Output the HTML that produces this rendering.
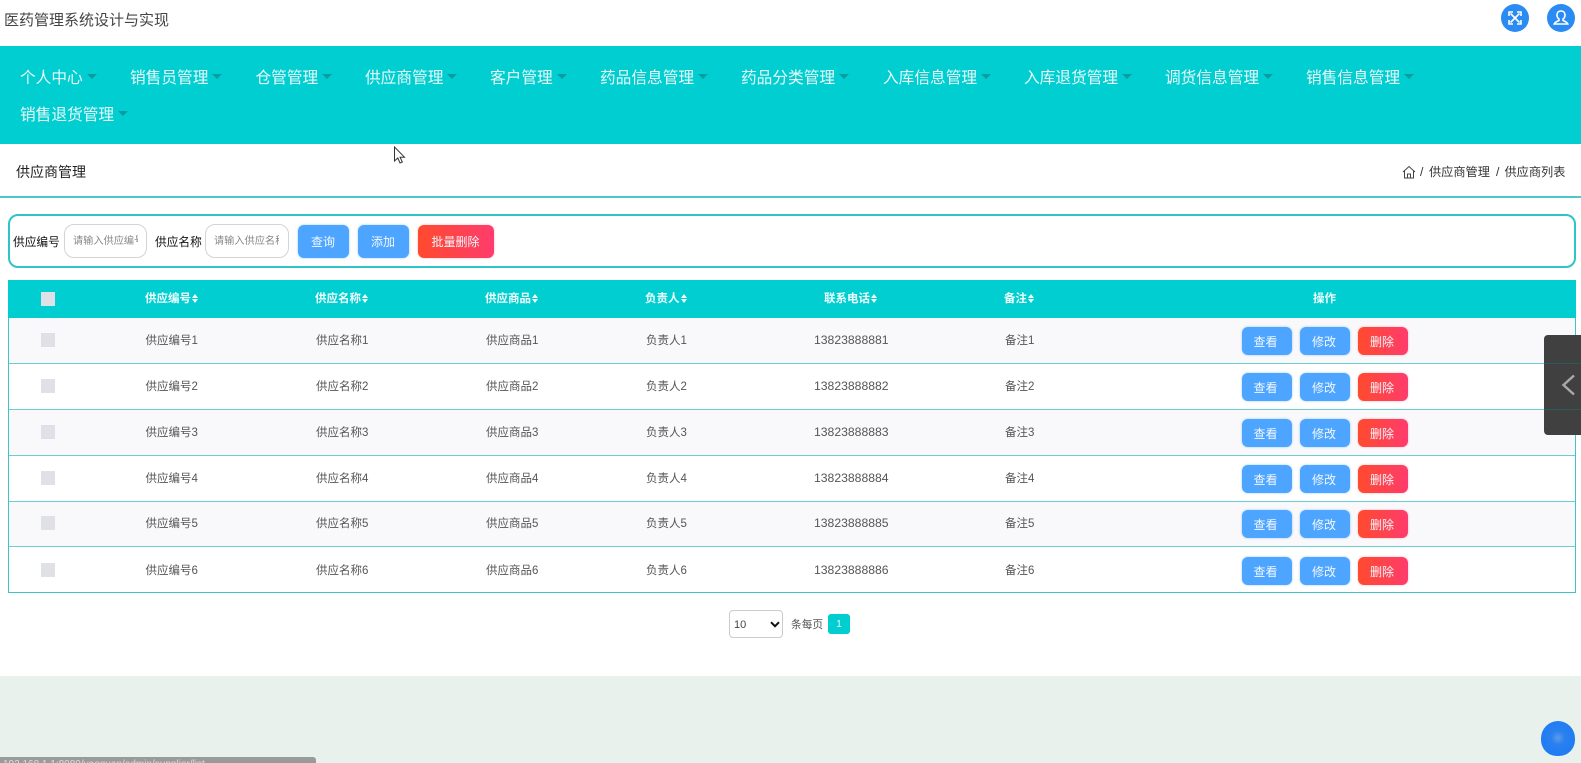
<!DOCTYPE html>
<html lang="zh">
<head>
<meta charset="utf-8">
<title>医药管理系统设计与实现</title>
<style>
*{box-sizing:border-box}
html,body{margin:0;padding:0;width:1581px;height:763px;overflow:hidden;background:#fff}
body{font-family:"Liberation Sans","Noto Sans CJK SC",sans-serif;color:#333}
#w{position:absolute;left:0;top:0;width:1581px;height:763px;overflow:hidden;filter:blur(.35px)}
.a{position:absolute;white-space:nowrap}
.title{left:4px;top:10px;font-size:15px;line-height:22px;color:#444}
.ic{position:absolute;top:4px;width:28px;height:28px;border-radius:50%;background:#2a8bf2}
.nav{position:absolute;left:0;top:46px;width:1581px;height:98px;background:#00ced1}
.n{position:absolute;font-size:15.7px;line-height:22px;color:#eafafa;white-space:nowrap}
.n i{display:inline-block;width:0;height:0;border-left:5px solid transparent;border-right:5px solid transparent;border-top:5px solid #0a9ca0;margin-left:4px;vertical-align:4px}
.crumbline{position:absolute;left:0;top:196px;width:1581px;height:2px;background:#4cc6c9}
.search{position:absolute;left:8px;top:214px;width:1568px;height:54px;border:2px solid #2fc4c7;border-radius:10px;background:#fff}
.lb{font-size:11.7px;line-height:16px;color:#111;top:235px}
.inp{position:absolute;top:224px;height:34px;border:1px solid #d4d4d4;border-radius:10px;background:#fff;font-size:10.2px;color:#888}
.inp span{position:absolute;left:8px;top:9px;height:16px;line-height:16px;overflow:hidden;white-space:nowrap}
.btn{position:absolute;border-radius:6px;color:#f2f8ff;text-align:center;background:#4ea5ff;box-shadow:0 0 2px rgba(64,158,255,.55)}
.top{top:225px;height:33px;line-height:35px;font-size:12px;padding-right:1px}
.red{background:linear-gradient(90deg,#ff4a2e,#ff3c6c);box-shadow:0 0 2px rgba(255,70,90,.4)}
.thead{position:absolute;left:8px;top:280px;width:1568px;height:38px;background:#00ced1}
.th{position:absolute;top:291px;font-size:11.5px;line-height:16px;font-weight:700;color:#f2ffff;white-space:nowrap}
.th b{display:inline-block;width:7px;height:9px;margin-left:1px;vertical-align:-1px;position:relative}
.th b:before{content:"";position:absolute;left:0;top:0;border-left:3.5px solid transparent;border-right:3.5px solid transparent;border-bottom:4px solid #f2ffff}
.th b:after{content:"";position:absolute;left:0;top:5px;border-left:3.5px solid transparent;border-right:3.5px solid transparent;border-top:4px solid #f2ffff}
.cb{position:absolute;left:41px;width:14px;height:14px;background:#dfe1e6}
.tbody{position:absolute;left:8px;top:318px;width:1568px;height:275px;border:1px solid #3fc3c6;border-top:0}
.r{position:absolute;left:8px;width:1568px;height:46px;border-bottom:1px solid #6bcfd1}
.r.odd{background:#f9f9fb}
.r.last{border-bottom:0;height:45px}
.rl{position:absolute;left:8px;top:501px;width:1568px;height:1px;background:#6bcfd1}
.td{position:absolute;font-size:11.5px;line-height:16px;color:#555;white-space:nowrap;top:15px}
.td.p{font-size:12.2px;top:14px}
.r .cb{left:33px;top:15px}
.b{top:9px;height:28px;line-height:30px;width:50px;font-size:12px;padding-right:2px}
.foot{position:absolute;left:0;top:676px;width:1581px;height:87px;background:#e8f1ec}
.sel{position:absolute;left:729px;top:610px;width:54px;height:28px;border:1px solid #ccc;border-radius:4px;background:#fff;font-size:11px;line-height:28px;padding-left:4px;color:#444}
.pg{position:absolute;left:828px;top:614px;width:22px;height:20px;border-radius:3px;background:#00ced1;color:#e9fbfb;font-size:10px;line-height:22px;text-align:center}
.side{position:absolute;left:1544px;top:335px;width:37px;height:100px;background:#404040;border-radius:4px 0 0 4px}
.side div{position:absolute;left:0;width:37px;height:1px;background:#2f5a5b}
.status{position:absolute;left:0;top:757px;width:316px;height:6px;background:#999b9a;border-radius:0 3px 0 0;overflow:hidden;color:#ddd;font-size:10px;line-height:16px;padding-left:3px;white-space:nowrap}
.blob{position:absolute;left:1541px;top:721px;width:34px;height:35px;border-radius:50% 50% 46% 46%;background:radial-gradient(circle at 50% 48%,#5d9be8 0,#2a80ee 28%,#1f7cf4 70%,#5aa6f6 100%)}
</style>
</head>
<body>
<div id="w">
<div class="a title">医药管理系统设计与实现</div>
<div class="ic" style="left:1501px">
<svg width="28" height="28" viewBox="0 0 28 28" fill="none" stroke="#fff" stroke-width="1.6"><path d="M9.500 9.500l9 9M18.500 9.500l-9 9M8 12V8h4M16 8h4v4M20 16v4h-4M12 20H8v-4"/></svg>
</div>
<div class="ic" style="left:1547px">
<svg width="28" height="28" viewBox="0 0 28 28" fill="none" stroke="#fff" stroke-width="1.6"><path d="M14 7c-2.600 0-4 1.800-4 4 0 1.800.8 3.200 2 4v1.500c-1.500.8-4 1.300-4.800 3.500h13.600c-.8-2.200-3.300-2.700-4.800-3.500V15c1.200-.8 2-2.200 2-4 0-2.200-1.400-4-4-4z"/></svg>
</div>

<div class="nav">
<span class="n" style="left:20px;top:22px">个人中心<i></i></span>
<span class="n" style="left:130px;top:22px">销售员管理<i></i></span>
<span class="n" style="left:255.500px;top:22px">仓管管理<i></i></span>
<span class="n" style="left:365px;top:22px">供应商管理<i></i></span>
<span class="n" style="left:490px;top:22px">客户管理<i></i></span>
<span class="n" style="left:600px;top:22px">药品信息管理<i></i></span>
<span class="n" style="left:741px;top:22px">药品分类管理<i></i></span>
<span class="n" style="left:883px;top:22px">入库信息管理<i></i></span>
<span class="n" style="left:1024px;top:22px">入库退货管理<i></i></span>
<span class="n" style="left:1165px;top:22px">调货信息管理<i></i></span>
<span class="n" style="left:1306px;top:22px">销售信息管理<i></i></span>
<span class="n" style="left:20px;top:59px">销售退货管理<i></i></span>
</div>

<svg class="a" style="left:393px;top:146px" width="13" height="19" viewBox="0 0 13 19"><path d="M1.500 1v14l3.300-3 2.200 5 2.300-1-2.200-4.800h4.400z" fill="#fff" stroke="#333" stroke-width="1"/></svg>

<div class="a" style="left:16px;top:162px;font-size:14px;line-height:20px;color:#222">供应商管理</div>
<svg class="a" style="left:1402px;top:165px" width="14" height="14" viewBox="0 0 14 14" fill="none" stroke="#444" stroke-width="1"><path d="M1 7l6-5.500L13 7M2.500 6v7h9V6M5.500 13V9h3v4"/></svg>
<div class="a" style="left:1420px;top:163px;font-size:12.2px;line-height:18px;color:#333">/</div>
<div class="a" style="left:1429px;top:163px;font-size:12.2px;line-height:18px;color:#333">供应商管理</div>
<div class="a" style="left:1496px;top:163px;font-size:12.2px;line-height:18px;color:#333">/</div>
<div class="a" style="left:1504.500px;top:163px;font-size:12.2px;line-height:18px;color:#333">供应商列表</div>
<div class="crumbline"></div>

<div class="search"></div>
<div class="a lb" style="left:13px">供应编号</div>
<div class="inp" style="left:64px;width:83px"><span style="width:65px">请输入供应编号</span></div>
<div class="a lb" style="left:155px">供应名称</div>
<div class="inp" style="left:205px;width:84px"><span style="width:65px">请输入供应名称</span></div>
<div class="btn top" style="left:298px;width:51px">查询</div>
<div class="btn top" style="left:358px;width:51px">添加</div>
<div class="btn top red" style="left:418px;width:76px">批量删除</div>

<div class="thead"></div>
<div class="cb" style="top:292px"></div>
<div class="th" style="left:145px">供应编号<b></b></div>
<div class="th" style="left:315px">供应名称<b></b></div>
<div class="th" style="left:485px">供应商品<b></b></div>
<div class="th" style="left:645px">负责人<b></b></div>
<div class="th" style="left:824px">联系电话<b></b></div>
<div class="th" style="left:1004px">备注<b></b></div>
<div class="th" style="left:1313px">操作</div>

<div class="r odd" style="top:318px"><div class="cb"></div><span class="td" style="left:137.500px">供应编号1</span><span class="td" style="left:308px">供应名称1</span><span class="td" style="left:478px">供应商品1</span><span class="td" style="left:638px">负责人1</span><span class="td p" style="left:806px">13823888881</span><span class="td" style="left:997px">备注1</span><div class="btn b" style="left:1233.500px">查看</div><div class="btn b" style="left:1292px">修改</div><div class="btn b red" style="left:1350px">删除</div></div>
<div class="r" style="top:364px"><div class="cb"></div><span class="td" style="left:137.500px">供应编号2</span><span class="td" style="left:308px">供应名称2</span><span class="td" style="left:478px">供应商品2</span><span class="td" style="left:638px">负责人2</span><span class="td p" style="left:806px">13823888882</span><span class="td" style="left:997px">备注2</span><div class="btn b" style="left:1233.500px">查看</div><div class="btn b" style="left:1292px">修改</div><div class="btn b red" style="left:1350px">删除</div></div>
<div class="r odd" style="top:410px"><div class="cb"></div><span class="td" style="left:137.500px">供应编号3</span><span class="td" style="left:308px">供应名称3</span><span class="td" style="left:478px">供应商品3</span><span class="td" style="left:638px">负责人3</span><span class="td p" style="left:806px">13823888883</span><span class="td" style="left:997px">备注3</span><div class="btn b" style="left:1233.500px">查看</div><div class="btn b" style="left:1292px">修改</div><div class="btn b red" style="left:1350px">删除</div></div>
<div class="r" style="top:456px"><div class="cb"></div><span class="td" style="left:137.500px">供应编号4</span><span class="td" style="left:308px">供应名称4</span><span class="td" style="left:478px">供应商品4</span><span class="td" style="left:638px">负责人4</span><span class="td p" style="left:806px">13823888884</span><span class="td" style="left:997px">备注4</span><div class="btn b" style="left:1233.500px">查看</div><div class="btn b" style="left:1292px">修改</div><div class="btn b red" style="left:1350px">删除</div></div>
<div class="r odd" style="top:501px"><div class="cb"></div><span class="td" style="left:137.500px">供应编号5</span><span class="td" style="left:308px">供应名称5</span><span class="td" style="left:478px">供应商品5</span><span class="td" style="left:638px">负责人5</span><span class="td p" style="left:806px">13823888885</span><span class="td" style="left:997px">备注5</span><div class="btn b" style="left:1233.500px">查看</div><div class="btn b" style="left:1292px">修改</div><div class="btn b red" style="left:1350px">删除</div></div>
<div class="rl"></div>
<div class="r last" style="top:548px"><div class="cb"></div><span class="td" style="left:137.500px">供应编号6</span><span class="td" style="left:308px">供应名称6</span><span class="td" style="left:478px">供应商品6</span><span class="td" style="left:638px">负责人6</span><span class="td p" style="left:806px">13823888886</span><span class="td" style="left:997px">备注6</span><div class="btn b" style="left:1233.500px">查看</div><div class="btn b" style="left:1292px">修改</div><div class="btn b red" style="left:1350px">删除</div></div>
<div class="tbody"></div>

<div class="sel">10
<svg class="a" style="left:40px;top:10px" width="10" height="7" viewBox="0 0 10 7" fill="none" stroke="#111" stroke-width="2"><path d="M1 1.200l4 4 4-4"/></svg>
</div>
<div class="a" style="left:791px;top:617px;font-size:10.7px;line-height:16px;color:#555">条每页</div>
<div class="pg">1</div>

<div class="foot"></div>
<div class="side">
<div style="top:28px"></div>
<div style="top:74px"></div>
<svg class="a" style="left:17px;top:39px" width="15" height="22" viewBox="0 0 15 22" fill="none" stroke="#a9a9a9" stroke-width="2.4"><path d="M13 1.500L2.500 11 13 20.500"/></svg>
</div>
<div class="status">192.168.1.1:8080/yaoguan/admin/supplier/list</div>
<div class="blob"></div>
</div>
</body>
</html>
